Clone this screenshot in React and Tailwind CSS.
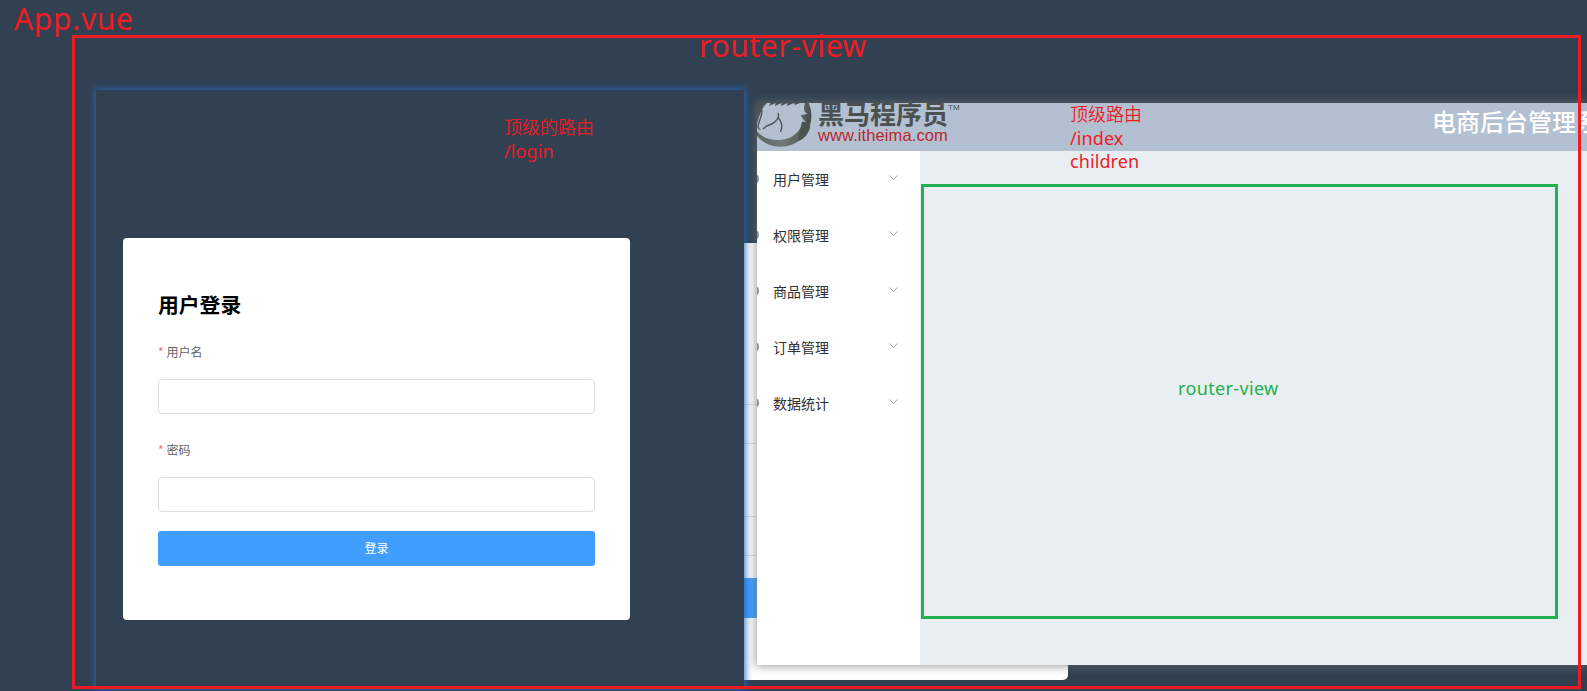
import { ChevronDown } from "lucide-react";

const menuItems = ["用户管理", "权限管理", "商品管理", "订单管理", "数据统计"];

function Logo() {
  return (
    <div className="flex h-12 shrink-0">
      <svg width="56" height="48" viewBox="0 0 56 48" className="shrink-0">
        <defs>
          <linearGradient id="ring" x1="0" y1="0.3" x2="1" y2="0.5">
            <stop offset="0" stopColor="#535b59" />
            <stop offset="0.65" stopColor="#717978" />
            <stop offset="0.85" stopColor="#5c6463" />
            <stop offset="1" stopColor="#454c4a" />
          </linearGradient>
        </defs>
        <circle cx="23.500" cy="12.800" r="31" fill="url(#ring)" />
        <path
          d="M-1 27 C4 34 13 37.500 23 37 C35 36 44 29 45 18.500 L49 19 C46.500 17 44.500 14.500 44 12 L50.500 11 C47 9 46 6 48 0 L48 -2 L9 -2 C7 4 4 8 2.500 13 L-1 24 Z"
          fill="#b3c0d1"
        />
        <path d="M45 19 L49 19.500 L53.500 10 L53 25 C51 31 47 36 42 38 C40 36 44.500 27 45 19 Z" fill="#4b5351" />
        <path
          d="M-1 -1 L11 -1 L5 5 L4 8 L0 15 L-1 15 Z M14 -1 L12 3 L18.500 0 L18 3 L24.500 0 L24 3 L30.500 0 L30 3 L37 0 L38 2 L43 0 L46 -1 Z"
          fill="#4b5351"
        />
        <path
          d="M5 7 C5 12 3 16 1.500 21 C0.500 24 1.500 26.500 3.500 26.500 M6 26 L9.500 23 C14 21.500 18 20 20 16.500 C22 14 22 12.500 21 10 M21.500 15 C23.500 18 26.500 21 23.500 29 M11 22.500 C14 22 16 20.500 18 19"
          fill="none"
          stroke="#4d5553"
          strokeWidth="1.4"
        />
      </svg>
      <div className="ml-[5px] flex flex-col">
        <div className="flex h-[23px] items-start">
          <span className="mt-[-3px] h-[26px] font-['Noto_Sans_CJK_SC',sans-serif] text-[26px] leading-[25px] font-bold text-[#4a5150]">
            黑马程序员
          </span>
          <span className="font-['Liberation_Sans',sans-serif] text-[8px] leading-[9px] text-[#4a5150]">
            TM
          </span>
        </div>
        <span className="font-['Liberation_Sans',sans-serif] text-[16.500px] leading-[18px] tracking-[0.1px] text-[#b8282b]">
          www.itheima.com
        </span>
      </div>
    </div>
  );
}

function Field({ label }) {
  return (
    <div className="flex flex-col">
      <label className="flex h-8 items-center gap-[3px] text-[12px] text-[#606266]">
        <span className="text-[#f56c6c]">*</span>
        {label}
      </label>
      <input className="mt-[11px] h-[35px] rounded-[4px] border border-[#dcdfe6] bg-white px-3 outline-none" />
    </div>
  );
}

function LoginWindow() {
  return (
    <section className="absolute top-[90px] left-24 h-[598px] w-[648px] bg-[#324152] pt-[148px] pl-[27px] shadow-[0_0_7px_1px_#2468b8]">
      <form className="flex h-[382px] w-[507px] flex-col rounded-[4px] bg-white px-[35px] pt-[49px]">
        <h2 className="h-[38px] text-[20.800px] leading-[34px] font-bold text-black">用户登录</h2>
        <div className="mt-[11px] flex flex-col gap-5">
          <Field label="用户名" />
          <Field label="密码" />
        </div>
        <button
          type="button"
          className="mt-[19px] h-[35px] rounded-[3px] bg-[#409eff] pb-[2px] text-[12px] text-white"
        >
          登录
        </button>
      </form>
    </section>
  );
}

function BackCard() {
  return (
    <section className="absolute top-[243px] left-[700px] flex h-[437px] w-[368px] flex-col rounded-[5px] bg-white pt-[161px]">
      <div className="h-10 border-y border-[#dcdfe6]" />
      <div className="mt-[72px] h-10 border-y border-[#dcdfe6]" />
      <div className="mt-[22px] h-10 w-[300px] bg-[#409eff]" />
    </section>
  );
}

function IndexWindow() {
  return (
    <section className="absolute top-[103px] left-[757px] flex h-[562px] w-[830px] flex-col shadow-[0_0_9px_1px_rgba(110,110,110,0.7)]">
      <header className="flex h-12 shrink-0 justify-between overflow-hidden bg-[#b3c0d1]">
        <Logo />
        <h1 className="w-[155px] shrink-0 text-[24px] leading-[35px] font-medium whitespace-nowrap text-white">
          电商后台管理系统
        </h1>
      </header>
      <div className="flex grow">
        <nav className="flex w-[163px] flex-col overflow-hidden bg-white">
          {menuItems.map((item) => (
            <div key={item} className="flex h-14 items-center pr-[19px]">
              <span className="mt-[-1px] -ml-[7px] h-[10px] w-[9px] rounded-full bg-[#7d92ad]" />
              <span className="ml-[14px] grow text-[14px] text-[#303133]">{item}</span>
              <ChevronDown className="mt-[-3px] size-[15px] text-[#909399]" strokeWidth={1.5} />
            </div>
          ))}
        </nav>
        <main className="grow bg-[#e9eef3]" />
      </div>
    </section>
  );
}

export default function App() {
  return (
    <div className="relative h-[691px] w-[1587px] overflow-hidden bg-[#324152] font-['Noto_Sans_CJK_SC',sans-serif]">
      <BackCard />
      <LoginWindow />
      <IndexWindow />
      <div className="absolute top-[184px] left-[921px] flex h-[435px] w-[637px] border-[3px] border-[#22b14c]">
        <span className="mt-[189px] ml-[254px] font-['Noto_Sans',sans-serif] text-[18px] leading-[24px] tracking-[0.35px] text-[#22b14c]">
          router-view
        </span>
      </div>
      <div className="absolute top-[35px] left-[72px] h-[654px] w-[1509px] border-[3px] border-[#ed1c24]" />
      <div className="absolute top-0 left-[14px] font-['Noto_Sans',sans-serif] text-[30px] leading-[38px] tracking-[0.7px] text-[#ed1c24]">
        App.vue
      </div>
      <div className="absolute top-[27px] left-[699px] font-['Noto_Sans',sans-serif] text-[30px] leading-[38px] tracking-[0.6px] text-[#ed1c24]">
        router-view
      </div>
      <div className="absolute top-[115px] left-[504px] flex flex-col font-['Noto_Sans',sans-serif] text-[18px] leading-[24px] tracking-[0.1px] text-[#ed1c24]">
        <span className="h-6 font-['Noto_Sans_CJK_SC',sans-serif] leading-[23px] font-[350] tracking-normal">
          顶级的路由
        </span>
        <span>/login</span>
      </div>
      <div className="absolute top-[102px] left-[1070px] flex flex-col font-['Noto_Sans',sans-serif] text-[18px] leading-[23px] tracking-[0.1px] text-[#ed1c24]">
        <span className="h-[25px] font-['Noto_Sans_CJK_SC',sans-serif] font-[350] tracking-normal">
          顶级路由
        </span>
        <span>/index</span>
        <span>children</span>
      </div>
    </div>
  );
}
